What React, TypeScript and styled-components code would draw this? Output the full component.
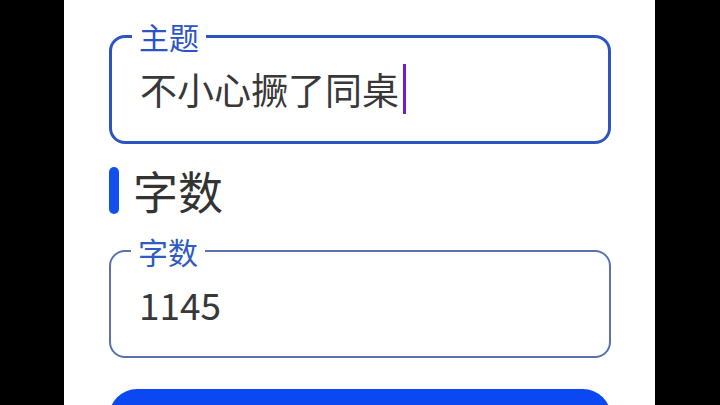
import styled, { createGlobalStyle } from "styled-components";

const GlobalStyle = createGlobalStyle`
    html, body {
        margin:0;
        padding:0;
        background:#000;
    }
    body {
        font-family:"Noto Sans CJK SC", "Noto Sans", sans-serif;
    }
`

interface IField {
    label:string,
    value:string,
    focused?:boolean
}

function Field({ label, value, focused }: IField) {
    return (
        <Box $focused={focused}>
            <Legend $focused={focused}>{label}</Legend>
            <Value>
                {value}
                {focused && <Caret />}
            </Value>
        </Box>
    )
}

function App() {
    return (
        <Screen>
            <GlobalStyle />
            <Panel>
                <Field label="主题" value="不小心撅了同桌" focused />
                <SectionTitle>
                    <Bar />
                    字数
                </SectionTitle>
                <Field label="字数" value="1145" />
                <SubmitButton aria-label="提交" />
            </Panel>
        </Screen>
    )
}

const Screen = styled.div`
    width:720px;
    height:405px;
    overflow:hidden;
    background:#000;
    display:flex;
`
const Panel = styled.div`
    width:591px;
    margin-left:64px;
    background:#fff;
    padding:21px 44px 0 45px;
    box-sizing:border-box;
    display:flex;
    flex-direction:column;
`
const Box = styled.fieldset<{ $focused?: boolean }>`
    margin:0;
    padding:0 20px 14px 20px;
    border:${props => props.$focused ? "3px solid #2d55c2" : "2px solid #5a72b0"};
    border-radius:16px;
    min-width:0;
`
const Legend = styled.legend<{ $focused?: boolean }>`
    padding:0 7px;
    font-size:30px;
    line-height:30px;
    color:${props => props.$focused ? "#2c54c4" : "#2f5bc2"};
`
const Value = styled.div`
    height:76px;
    display:flex;
    align-items:center;
    padding-left:8px;
    font-size:37px;
    color:#383838;
`
const Caret = styled.span`
    display:inline-block;
    width:3px;
    height:50px;
    margin-left:4px;
    background:#6a20d0;
`
const SectionTitle = styled.h2`
    margin:23px 0 22px 0;
    display:flex;
    align-items:center;
    gap:14px;
    height:47px;
    font-size:45px;
    font-weight:400;
    color:#333;
`
const Bar = styled.span`
    width:10px;
    height:47px;
    border-radius:5px;
    background:#1150ee;
`
const SubmitButton = styled.button`
    margin-top:31px;
    height:60px;
    flex-shrink:0;
    border:none;
    border-radius:28px;
    background:#0b48f2;
`

export default App
